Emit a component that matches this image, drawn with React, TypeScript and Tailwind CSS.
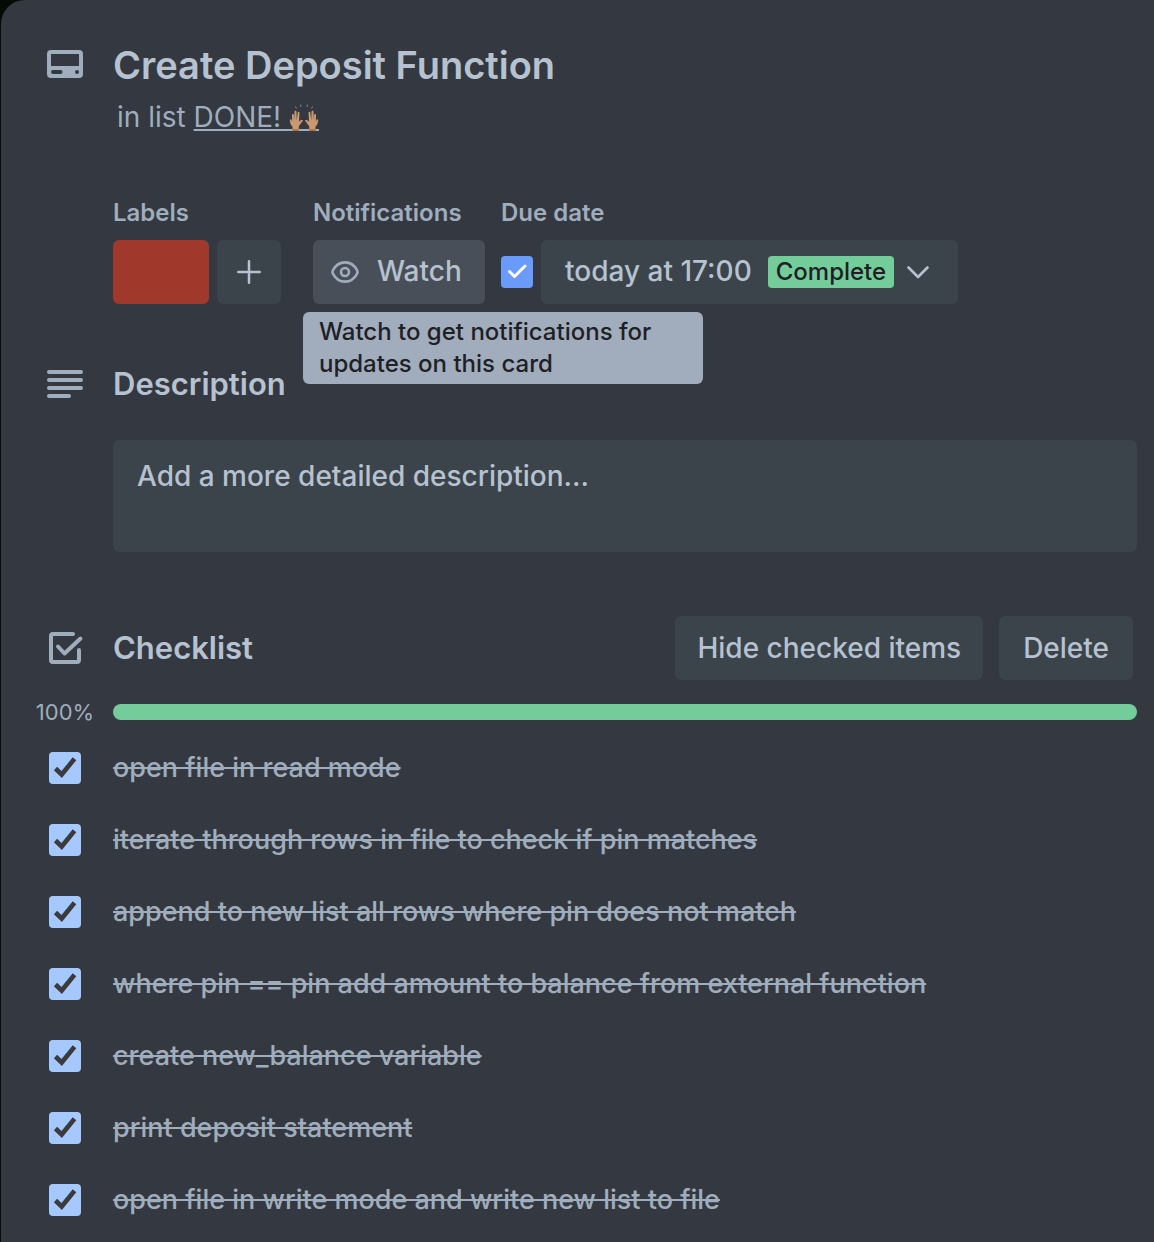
import { useState } from "react";
import type { ReactNode } from "react";

const ITEMS = [
  "open file in read mode",
  "iterate through rows in file to check if pin matches",
  "append to new list all rows where pin does not match",
  "where pin == pin add amount to balance from external function",
  "create new_balance variable",
  "print deposit statement",
  "open file in write mode and write new list to file",
];

function CardIcon() {
  return (
    <svg className="size-12" viewBox="0 0 48 48" aria-hidden="true">
      <path
        fill="#9fadbc"
        fillRule="evenodd"
        d="M10 9h28a4 4 0 0 1 4 4v20a4 4 0 0 1-4 4H10a4 4 0 0 1-4-4V13a4 4 0 0 1 4-4Zm0 4v12h28V13H10Zm2 16a2 2 0 0 0 0 4h7.500a2 2 0 0 0 0-4H12Zm24 0a2 2 0 1 0 0 4 2 2 0 0 0 0-4Z"
      />
    </svg>
  );
}

function DescriptionIcon() {
  return (
    <svg className="size-12" viewBox="0 0 48 48" stroke="#9fadbc" strokeWidth="4" strokeLinecap="round" aria-hidden="true">
      <path d="M8 12H40M8 20H40M8 28H40M8 36H28" />
    </svg>
  );
}

function ChecklistIcon() {
  return (
    <svg className="size-12" viewBox="0 0 48 48" fill="none" stroke="#9fadbc" strokeWidth="4" strokeLinecap="round" strokeLinejoin="round" aria-hidden="true">
      <path d="M32 10H12a2 2 0 0 0-2 2V36a2 2 0 0 0 2 2H36a2 2 0 0 0 2-2V26" />
      <path d="M17 22.500L23.500 29.500L39.500 14.500" />
    </svg>
  );
}

function Hand({ transform }: { transform: string }) {
  return (
    <g transform={transform}>
      <path
        fill="#c99972"
        d="M3.500 27.500V22C1.500 19.500.8 16.500.9 13.200c0-1.200 1.500-1.200 1.700 0l.5 2.800L3 6.500c0-1.300 1.900-1.300 2 0l.3 7 .2-11c0-1.300 2-1.300 2 0l.2 11 1-9.800c.2-1.200 1.900-1 1.800.2l-.5 11.600c1-1.500 2-2.300 3.300-2.200.9.200.8 1 .2 1.700-1.400 1.800-2.200 4.200-3.700 6.500v6Z"
      />
      <path fill="#a97350" d="M3.500 25H9.800v2.500H3.500Z" />
    </g>
  );
}

function RaisedHands() {
  return (
    <svg className="inline-block h-7 w-[30px] align-[-4px]" viewBox="0 0 30 28" role="img" aria-label="raised hands">
      <path fill="#9fadbc" d="M0 26H30V28H0Z" />
      <path d="M6.500 4l.8 1M11.500 2l.3 1.300M18.500 2l-.3 1.300M23.500 4l-.8 1" stroke="#7b7f84" strokeWidth="1.200" strokeLinecap="round" />
      <Hand transform="translate(0 6.600) scale(1 .78)" />
      <Hand transform="translate(30 6.600) scale(-1 .78)" />
    </svg>
  );
}

function Row({ icon, children }: { icon: ReactNode; children: ReactNode }) {
  return (
    <div className="flex items-center">
      <div className="flex w-28 shrink-0 justify-center pl-4">{icon}</div>
      <div className="min-w-0 flex-1">{children}</div>
    </div>
  );
}

function ChecklistItem({ id, text }: { id: string; text: string }) {
  const [checked, setChecked] = useState(true);
  return (
    <li>
      <Row
        icon={
          <span className="relative grid size-8">
            <input
              id={id}
              type="checkbox"
              checked={checked}
              onChange={() => setChecked(!checked)}
              className="size-8 appearance-none rounded bg-[#3b444c] checked:bg-[#a5c8ff]"
            />
            {checked && (
              <svg className="pointer-events-none absolute inset-0 size-8" viewBox="0 0 32 32" fill="none" stroke="#3a3a3c" strokeWidth="4.600" aria-hidden="true">
                <path d="M6.500 16.500L12.700 22.500L25.500 6.800" />
              </svg>
            )}
          </span>
        }
      >
        <label
          htmlFor={id}
          className={
            checked
              ? "block py-4 text-[27px] leading-10 font-medium text-[#9fadbc] line-through decoration-2"
              : "block py-4 text-[27px] leading-10 font-medium text-[#b6c2cf]"
          }
        >
          {text}
        </label>
      </Row>
    </li>
  );
}

export default function App() {
  const [done, setDone] = useState(true);
  return (
    <div className="min-h-screen bg-[#060a04] pl-px font-['Inter',sans-serif]">
      <main className="min-h-screen rounded-tl-3xl bg-[#343840] pt-10 pr-[17px] text-[#b6c2cf]">
        <header>
          <Row icon={<CardIcon />}>
            <h1 className="text-[38px] leading-[50px] font-semibold">Create Deposit Function</h1>
          </Row>
          <p className="mt-[7px] pl-[116px] text-[28px] leading-10 text-[#9fadbc]">
            in list{" "}
            <a href="#done" className="whitespace-nowrap underline decoration-2 underline-offset-2">
              DONE! <RaisedHands />
            </a>
          </p>
        </header>

        <div className="mt-15 ml-28 flex flex-wrap text-2xl">
          <section className="mr-8">
            <h3 className="mb-[11px] leading-8 font-semibold text-[#9fadbc]">Labels</h3>
            <div className="flex gap-2">
              <button type="button" aria-label="Red label" className="h-16 w-24 rounded-md bg-[#a0382c]" />
              <button type="button" aria-label="Add label" className="grid size-16 place-items-center rounded-md bg-[#3c444b]">
                <svg className="size-6" viewBox="0 0 24 24" stroke="#b6c2cf" strokeWidth="2.500" strokeLinecap="round" aria-hidden="true">
                  <path d="M12 1.250V22.750M1.250 12H22.750" />
                </svg>
              </button>
            </div>
          </section>

          <section className="relative mr-4">
            <h3 className="mb-[11px] leading-8 font-semibold text-[#9fadbc]">Notifications</h3>
            <button type="button" aria-describedby="watch-tip" className="flex h-16 w-[172px] items-center gap-[18px] rounded-md bg-[#484f58] pl-[18px] text-[28px] font-medium">
              <svg className="h-6 w-7" viewBox="0 0 28 24" fill="none" stroke="#9fadbc" strokeWidth="2.600" aria-hidden="true">
                <path d="M14 2.400C9 2.400 4.700 5.200 2 10.200a3.600 3.600 0 0 0 0 3.600C4.700 18.800 9 21.600 14 21.600s9.300-2.800 12-7.800a3.600 3.600 0 0 0 0-3.600C23.300 5.200 19 2.400 14 2.400Z" />
                <circle cx="14" cy="12" r="4" />
              </svg>
              Watch
            </button>
            <div id="watch-tip" role="tooltip" className="absolute top-full -left-2.5 z-10 mt-2 w-[400px] rounded-md bg-[#a1adbc] px-4 py-1 text-2xl leading-8 font-medium text-[#1d2125]">
              Watch to get notifications for updates on this card
            </div>
          </section>

          <section>
            <h3 className="mb-[11px] leading-8 font-semibold text-[#9fadbc]">Due date</h3>
            <div className="flex items-center gap-2">
              <span className="relative grid size-8">
                <input
                  type="checkbox"
                  aria-label="Mark due date complete"
                  checked={done}
                  onChange={() => setDone(!done)}
                  className="size-8 appearance-none rounded-sm bg-[#3b444c] checked:bg-[#6a9bfa]"
                />
                {done && (
                  <svg className="pointer-events-none absolute inset-0 size-8" viewBox="0 0 32 32" fill="none" stroke="#fff" strokeWidth="3" strokeLinecap="round" strokeLinejoin="round" aria-hidden="true">
                    <path d="M8.500 15.500L13.500 20.500L24 10" />
                  </svg>
                )}
              </span>
              <button type="button" className="flex h-16 items-center rounded-md bg-[#3c444b] pr-7 pl-6 text-[28px] font-medium">
                today at 17:00
                <span className="ml-4 rounded bg-[#75cc9b] px-2 text-2xl leading-8 font-medium text-[#1d2125]">Complete</span>
                <svg className="ml-3 h-6 w-6" viewBox="0 0 24 24" fill="none" stroke="#b6c2cf" strokeWidth="2.600" strokeLinecap="round" strokeLinejoin="round" aria-hidden="true">
                  <path d="M2.500 7.500L12 17L21.500 7.500" />
                </svg>
              </button>
            </div>
          </section>
        </div>

        <section className="mt-14">
          <Row icon={<DescriptionIcon />}>
            <h2 className="text-[31px] leading-[48px] font-semibold">Description</h2>
          </Row>
          <div className="mt-8 pl-28">
            <textarea
              aria-label="Description"
              placeholder="Add a more detailed description..."
              className="block h-28 w-full resize-none rounded-md bg-[#3c444b] px-6 py-4 text-[28px] leading-10 font-medium placeholder:text-[#b6c2cf]"
            />
          </div>
        </section>

        <section className="mt-16">
          <Row icon={<ChecklistIcon />}>
            <div className="flex items-center gap-4 pr-1">
              <h2 className="flex-1 text-[31px] leading-[48px] font-semibold">Checklist</h2>
              <button type="button" className="h-16 rounded-md bg-[#3c444b] px-[22px] text-[28px] font-medium">Hide checked items</button>
              <button type="button" className="h-16 rounded-md bg-[#3c444b] px-6 text-[28px] font-medium">Delete</button>
            </div>
          </Row>
          <div className="mt-4 mb-1">
            <Row icon={<span className="text-[22px] leading-8 text-[#9fadbc]">100%</span>}>
              <div role="progressbar" aria-label="Checklist progress" aria-valuenow={100} aria-valuemin={0} aria-valuemax={100} className="h-4 rounded-full bg-[#75cc9b]" />
            </Row>
          </div>
          <ul>
            {ITEMS.map((text, i) => (
              <ChecklistItem key={text} id={`item-${i}`} text={text} />
            ))}
          </ul>
        </section>
      </main>
    </div>
  );
}
